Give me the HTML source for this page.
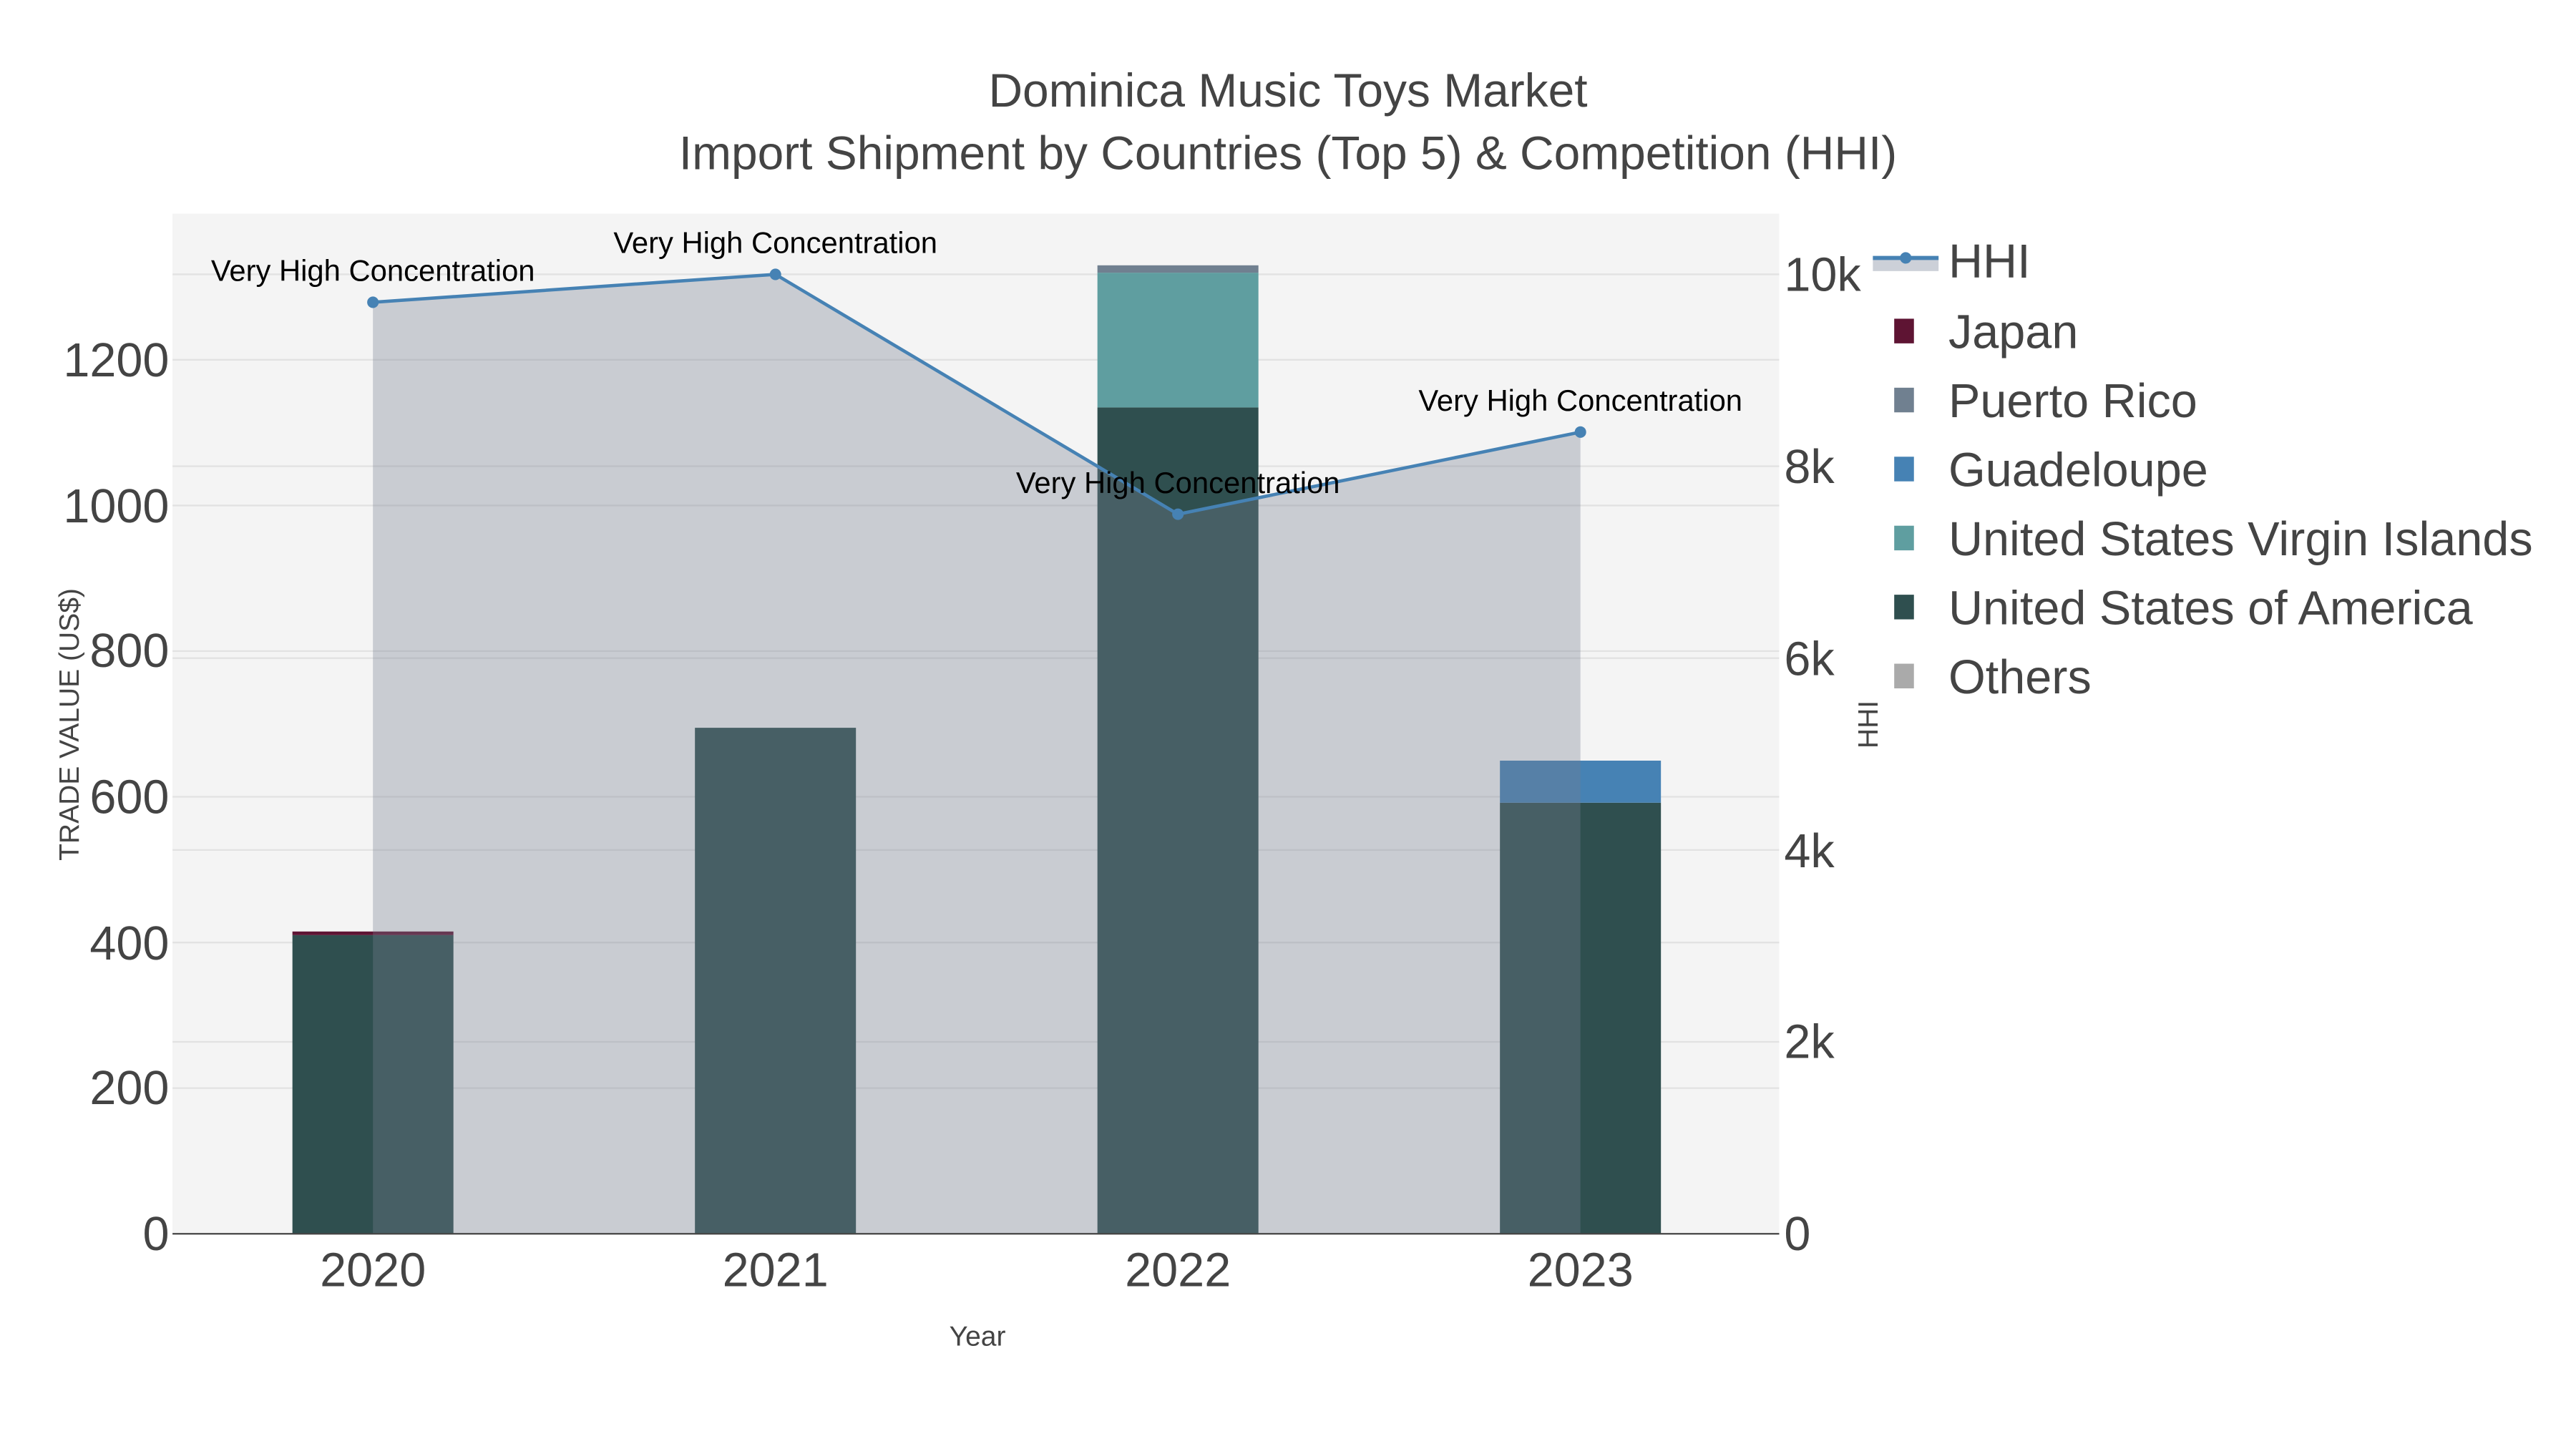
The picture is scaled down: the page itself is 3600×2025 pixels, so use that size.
<!DOCTYPE html>
<html><head><meta charset="utf-8"><style>html,body{margin:0;padding:0;background:#fff}svg{display:block}</style></head>
<body>
<svg width="3600" height="2025" viewBox="0 0 1568 882" xmlns="http://www.w3.org/2000/svg" font-family="Liberation Sans, sans-serif">
<rect x="0" y="0" width="1568" height="882" fill="#fff"/>
<rect x="105" y="130" width="978" height="621" fill="#f4f4f4"/>
<g stroke="#e2e2e2" stroke-width="1">
<line x1="105" x2="1083" y1="662.3" y2="662.3"/><line x1="105" x2="1083" y1="573.7" y2="573.7"/><line x1="105" x2="1083" y1="485" y2="485"/><line x1="105" x2="1083" y1="396.3" y2="396.3"/><line x1="105" x2="1083" y1="307.7" y2="307.7"/><line x1="105" x2="1083" y1="219" y2="219"/>
<line x1="105" x2="1083" y1="634.2" y2="634.2"/><line x1="105" x2="1083" y1="517.4" y2="517.4"/><line x1="105" x2="1083" y1="400.6" y2="400.6"/><line x1="105" x2="1083" y1="283.8" y2="283.8"/><line x1="105" x2="1083" y1="167" y2="167"/>
</g>
<rect x="178" y="569.2" width="98" height="181.8" fill="#2f4f4f"/>
<rect x="178" y="567" width="98" height="2.2" fill="#5e1433"/>
<rect x="423" y="443" width="98" height="308" fill="#2f4f4f"/>
<rect x="668" y="248" width="98" height="503" fill="#2f4f4f"/>
<rect x="668" y="166" width="98" height="82" fill="#5f9ea0"/>
<rect x="668" y="161.5" width="98" height="4.5" fill="#708090"/>
<rect x="913" y="488.6" width="98" height="262.4" fill="#2f4f4f"/>
<rect x="913" y="463" width="98" height="25.6" fill="#4682b4"/>
<polygon points="227,184 472,167 717,313 962,263 962,751 227,751" fill="rgb(117,126,144)" fill-opacity="0.34"/>
<polyline points="227,184 472,167 717,313 962,263" fill="none" stroke="#4682b4" stroke-width="2"/>
<g fill="#4682b4"><circle cx="227" cy="184" r="3.5"/><circle cx="472" cy="167" r="3.5"/><circle cx="717" cy="313" r="3.5"/><circle cx="962" cy="263" r="3.5"/></g>
<line x1="105" x2="1083" y1="751" y2="751" stroke="#444" stroke-width="1"/>
<g font-size="18.2" fill="#000" text-anchor="middle">
<text x="227" y="171">Very High Concentration</text>
<text x="472" y="154">Very High Concentration</text>
<text x="717" y="300">Very High Concentration</text>
<text x="962" y="250">Very High Concentration</text>
</g>
<g font-size="28.7" fill="#444" text-anchor="middle">
<text x="784" y="65">Dominica Music Toys Market</text>
<text x="784" y="103">Import Shipment by Countries (Top 5) &amp; Competition (HHI)</text>
</g>
<g font-size="29" fill="#444" text-anchor="middle">
<text x="227" y="783">2020</text><text x="472" y="783">2021</text><text x="717" y="783">2022</text><text x="962" y="783">2023</text>
</g>
<g font-size="29" fill="#444" text-anchor="end">
<text x="103" y="761">0</text><text x="103" y="672">200</text><text x="103" y="584">400</text><text x="103" y="495">600</text><text x="103" y="406">800</text><text x="103" y="318">1000</text><text x="103" y="229">1200</text>
</g>
<g font-size="29" fill="#444">
<text x="1086" y="761">0</text><text x="1086" y="644">2k</text><text x="1086" y="528">4k</text><text x="1086" y="411">6k</text><text x="1086" y="294">8k</text><text x="1086" y="177">10k</text>
</g>
<text x="595" y="819" font-size="17" fill="#444" text-anchor="middle">Year</text>
<text transform="translate(48,441) rotate(-90)" font-size="17" fill="#444" text-anchor="middle">TRADE VALUE (US$)</text>
<text transform="translate(1143,441) rotate(-90)" font-size="17" fill="#444" text-anchor="middle">HHI</text>
<rect x="1140" y="158" width="40" height="7" fill="#ccd0d8"/>
<line x1="1140" x2="1180" y1="157" y2="157" stroke="#4682b4" stroke-width="2.5"/>
<circle cx="1160" cy="157" r="3.5" fill="#4682b4"/>
<rect x="1153" y="194" width="12" height="15" fill="#5e1433"/>
<rect x="1153" y="236" width="12" height="15" fill="#708090"/>
<rect x="1153" y="278" width="12" height="15" fill="#4682b4"/>
<rect x="1153" y="320" width="12" height="15" fill="#5f9ea0"/>
<rect x="1153" y="362" width="12" height="15" fill="#2f4f4f"/>
<rect x="1153" y="404" width="12" height="15" fill="#aaaaaa"/>
<g font-size="29" fill="#444">
<text x="1186" y="169">HHI</text>
<text x="1186" y="212">Japan</text>
<text x="1186" y="254">Puerto Rico</text>
<text x="1186" y="296">Guadeloupe</text>
<text x="1186" y="338">United States Virgin Islands</text>
<text x="1186" y="380">United States of America</text>
<text x="1186" y="422">Others</text>
</g>
</svg>
</body></html>
